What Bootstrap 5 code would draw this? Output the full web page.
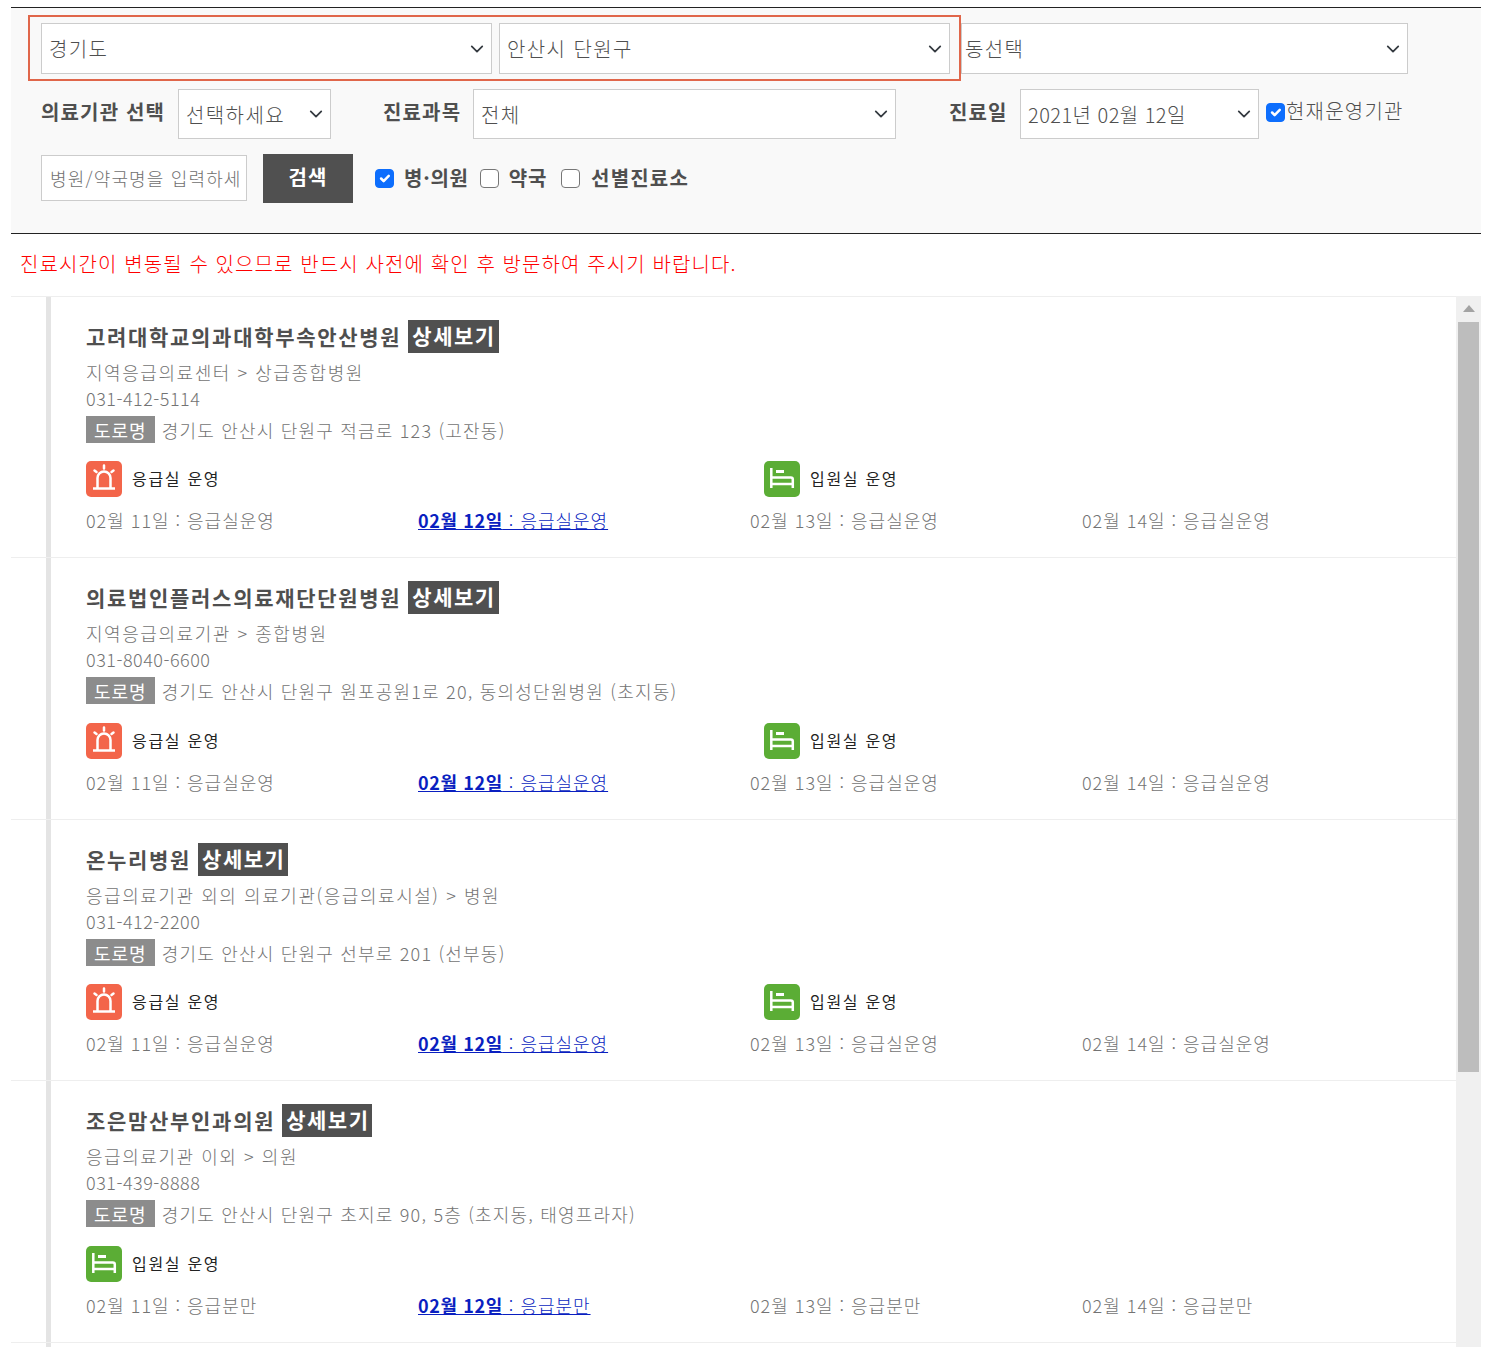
<!doctype html>
<html lang="ko"><head><meta charset="utf-8">
<link href="https://cdn.jsdelivr.net/npm/bootstrap@5.3.0/dist/css/bootstrap.min.css" rel="stylesheet">
<style>
html,body{height:1347px;overflow:hidden;background:#fff}
body{font-family:"Noto Sans CJK KR","Noto Sans",sans-serif;font-weight:300;color:#777;padding:7px 7px 0 11px;font-size:18px}
.fbox{background:#f9f9f9;border-top:1px solid #222;border-bottom:1px solid #222;height:227px;padding:7px 0 0 17px}
.redbox{border:2px solid #e0664a;padding:6px 9px 6px 11px;width:933px;height:66px;gap:7px}
.sel{border:1px solid #ccc;border-radius:0;font-size:20px;font-weight:300;color:#4f4f4f;background-color:#fff;background-position:right 5px center;background-size:18px 14px;padding:0 24px 0 7px;box-shadow:none;letter-spacing:1.4px}
.sel.h51{height:51px}.sel.h50{height:50px;padding-top:2px}
.sel.dong{padding-left:3px}
.sel.dt{letter-spacing:.45px;padding-top:1px}
.w451{width:451px}.w447{width:447px}.w153{width:153px}.w423{width:423px}.w239{width:239px}
.row2{margin-top:8px;padding-left:13px}
.lbl{font-size:20px;font-weight:700;color:#4f4f4f;white-space:nowrap;margin-bottom:4px;letter-spacing:1.15px}
.m1{width:137px}.m2{width:90px;margin-left:52px}.m3{width:71px;margin-left:53px}
.row3{margin-top:15px;padding-left:13px}
.sinput{width:206px;height:46px;border:1px solid #ccc;border-radius:0;font-size:18px;font-weight:300;padding:0 5px 0 8px;color:#555;margin-top:1px;letter-spacing:1.15px;background:#fff}
.sinput::placeholder{color:#6f6f6f}
.sbtn{width:90px;height:49px;background:#505050;border:0;border-radius:0;color:#fff;font-size:20px;font-weight:700;margin-left:16px;padding:0 0 4px;letter-spacing:1px}
.form-check-input.cb{width:19px;height:19px;margin:0;border:1px solid #777;border-radius:4px;background-color:#fff;flex:none}
.form-check-input.cb:checked{background-color:#0d6efd;border-color:#0d6efd}
.form-check-input.cb.cur-cb{margin:0 1px 3px 7px}
.chk{font-size:20px;font-weight:700;color:#4f4f4f;letter-spacing:.75px;height:48px;margin-left:22px}
.chk span{margin:0 14px 0 10px}
.chk span:first-of-type{margin-right:11px}
.chk span:last-of-type{margin:0 0 0 11px;letter-spacing:1.2px}
.cur{font-size:20px;font-weight:300;color:#4f4f4f;margin:0 0 6px 0;line-height:1;white-space:nowrap;letter-spacing:1.2px}
.notice{color:#f00;font-size:20px;padding-left:9px;height:61.9px;line-height:60px;letter-spacing:1.1px;white-space:nowrap}
.wrap{height:1051px;overflow:hidden}
.items{width:1445px}
.item{height:261.5px;border-top:1px solid #eee;padding-left:35px;overflow:hidden}
.inner{border-left:5px solid #e4e4e4;height:100%;padding:23px 0 0 35px}
.nm{height:33px;font-size:21px;font-weight:700;color:#4f4f4f;letter-spacing:1.7px;white-space:nowrap}
.dbtn{background:#505050;color:#fff;font-size:21px;font-weight:700;height:33px;line-height:31px;padding:0 3px 0 4px;margin-left:7px;letter-spacing:1.5px}
.ln{height:26px;line-height:26px;color:#737373;white-space:nowrap}
.ln1{margin-top:6px;letter-spacing:1.55px}
.ln2{letter-spacing:.5px}
.road{margin-top:5px;height:27px;line-height:29px;white-space:nowrap;color:#737373}
.addr{letter-spacing:1.2px}
.rtag{background:#8c8c8c;color:#fff;padding:0 8px;display:inline-block;height:27px;line-height:28px;margin-right:7px;letter-spacing:1px;font-weight:400}
.icons{margin-top:18.4px;height:36px}
.icell{width:678px}
.ico{width:36px;height:36px;flex:none;margin-right:10px}
.itxt{font-size:16px;color:#222;letter-spacing:1.7px;font-weight:400;margin-bottom:2px}
.dates{margin-top:10px;height:26px;line-height:26px}
.dcell{width:332px;white-space:nowrap;color:#737373;letter-spacing:.98px}
.dcell a{color:#0a1fc0}
.dcell a b{font-weight:700;letter-spacing:.6px}
.sbar{width:25px;height:1051px;background:#f0f0f0;padding:0 2px}
.arrow{height:26px}
.thumb{height:750px;background:#bdbdbd}
</style></head><body>
<div class="fbox">
  <div class="d-flex">
    <div class="redbox d-flex">
      <select class="form-select sel h51 w451"><option>경기도</option></select>
      <select class="form-select sel h51 w451"><option>안산시 단원구</option></select>
    </div>
    <select class="form-select sel dong h51 w447 mt-2"><option>동선택</option></select>
  </div>
  <div class="d-flex align-items-center row2">
    <div class="lbl m1">의료기관 선택</div>
    <select class="form-select sel h50 w153"><option>선택하세요</option></select>
    <div class="lbl m2">진료과목</div>
    <select class="form-select sel h50 w423"><option>전체</option></select>
    <div class="lbl m3">진료일</div>
    <select class="form-select sel dt h50 w239"><option>2021년 02월 12일</option></select>
    <input class="form-check-input cb cur-cb" type="checkbox" checked aria-label="현재운영기관">
    <div class="cur">현재운영기관</div>
  </div>
  <div class="d-flex row3 align-items-start">
    <input class="form-control sinput" placeholder="병원/약국명을 입력하세요">
    <button class="btn sbtn">검색</button>
    <div class="d-flex align-items-center chk">
      <input class="form-check-input cb" type="checkbox" checked aria-label="병의원"><span>병·의원</span>
      <input class="form-check-input cb" type="checkbox" aria-label="약국"><span>약국</span>
      <input class="form-check-input cb" type="checkbox" aria-label="선별진료소"><span>선별진료소</span>
    </div>
  </div>
</div>
<div class="notice">진료시간이 변동될 수 있으므로 반드시 사전에 확인 후 방문하여 주시기 바랍니다.</div>
<div class="wrap d-flex">
<div class="items" id="L"></div>
<div class="sbar"><div class="arrow d-flex justify-content-center align-items-center"><svg width="12" height="7" viewBox="0 0 12 7" aria-hidden="true"><path d="M6 0 12 7H0z" fill="#a3a3a3"/></svg></div><div class="thumb"></div></div>
</div>
<script>
const alarm='<svg class="ico" viewBox="0 0 36 36" aria-hidden="true"><rect width="36" height="36" rx="5" fill="#f3654a"/><g stroke="#fff" stroke-width="2.500" fill="none"><path d="M11.500 27V17a6.500 6.500 0 0 1 13 0V27"/><path d="M7 27.500h22"/><path d="M18 4.500v3M8.500 9.500l2 1.500M27.500 9.500l-2 1.500" stroke-linecap="round"/></g></svg>';
const bed='<svg class="ico" viewBox="0 0 36 36" aria-hidden="true"><rect width="36" height="36" rx="5" fill="#5bad35"/><g stroke="#fff" stroke-width="2.500" fill="none"><path d="M7.300 7v20M7.300 16.500h19.500a2 2 0 0 1 2 2V27M7.300 23h21.500"/></g><rect x="12" y="9" width="8" height="3" fill="#fff"/></svg>';
const data=[
["고려대학교의과대학부속안산병원","지역응급의료센터 &gt; 상급종합병원","031-412-5114","경기도 안산시 단원구 적금로 123 (고잔동)",1,"응급실운영"],
["의료법인플러스의료재단단원병원","지역응급의료기관 &gt; 종합병원","031-8040-6600","경기도 안산시 단원구 원포공원1로 20, 동의성단원병원 (초지동)",1,"응급실운영"],
["온누리병원","응급의료기관 외의 의료기관(응급의료시설) &gt; 병원","031-412-2200","경기도 안산시 단원구 선부로 201 (선부동)",1,"응급실운영"],
["조은맘산부인과의원","응급의료기관 이외 &gt; 의원","031-439-8888","경기도 안산시 단원구 초지로 90, 5층 (초지동, 태영프라자)",0,"응급분만"],
["","","","",0,""]];
document.getElementById('L').innerHTML=data.map((d,i)=>i==4?'<div class="item"><div class="inner"></div></div>':`<div class="item"><div class="inner">
<div class="nm d-flex align-items-center"><span>${d[0]}</span><span class="dbtn">상세보기</span></div>
<div class="ln ln1">${d[1]}</div><div class="ln ln2">${d[2]}</div>
<div class="road"><span class="rtag">도로명</span><span class="addr">${d[3]}</span></div>
<div class="icons d-flex">${d[4]?`<div class="icell d-flex align-items-center">${alarm}<span class="itxt">응급실 운영</span></div>`:''}<div class="icell d-flex align-items-center">${bed}<span class="itxt">입원실 운영</span></div></div>
<div class="dates d-flex"><div class="dcell">02월 11일 : ${d[5]}</div><div class="dcell"><a href="#"><b>02월 12일</b> : ${d[5]}</a></div><div class="dcell">02월 13일 : ${d[5]}</div><div class="dcell">02월 14일 : ${d[5]}</div></div>
</div></div>`).join('');
</script>
<script src="https://cdn.jsdelivr.net/npm/bootstrap@5.3.0/dist/js/bootstrap.bundle.min.js"></script>
</body></html>
